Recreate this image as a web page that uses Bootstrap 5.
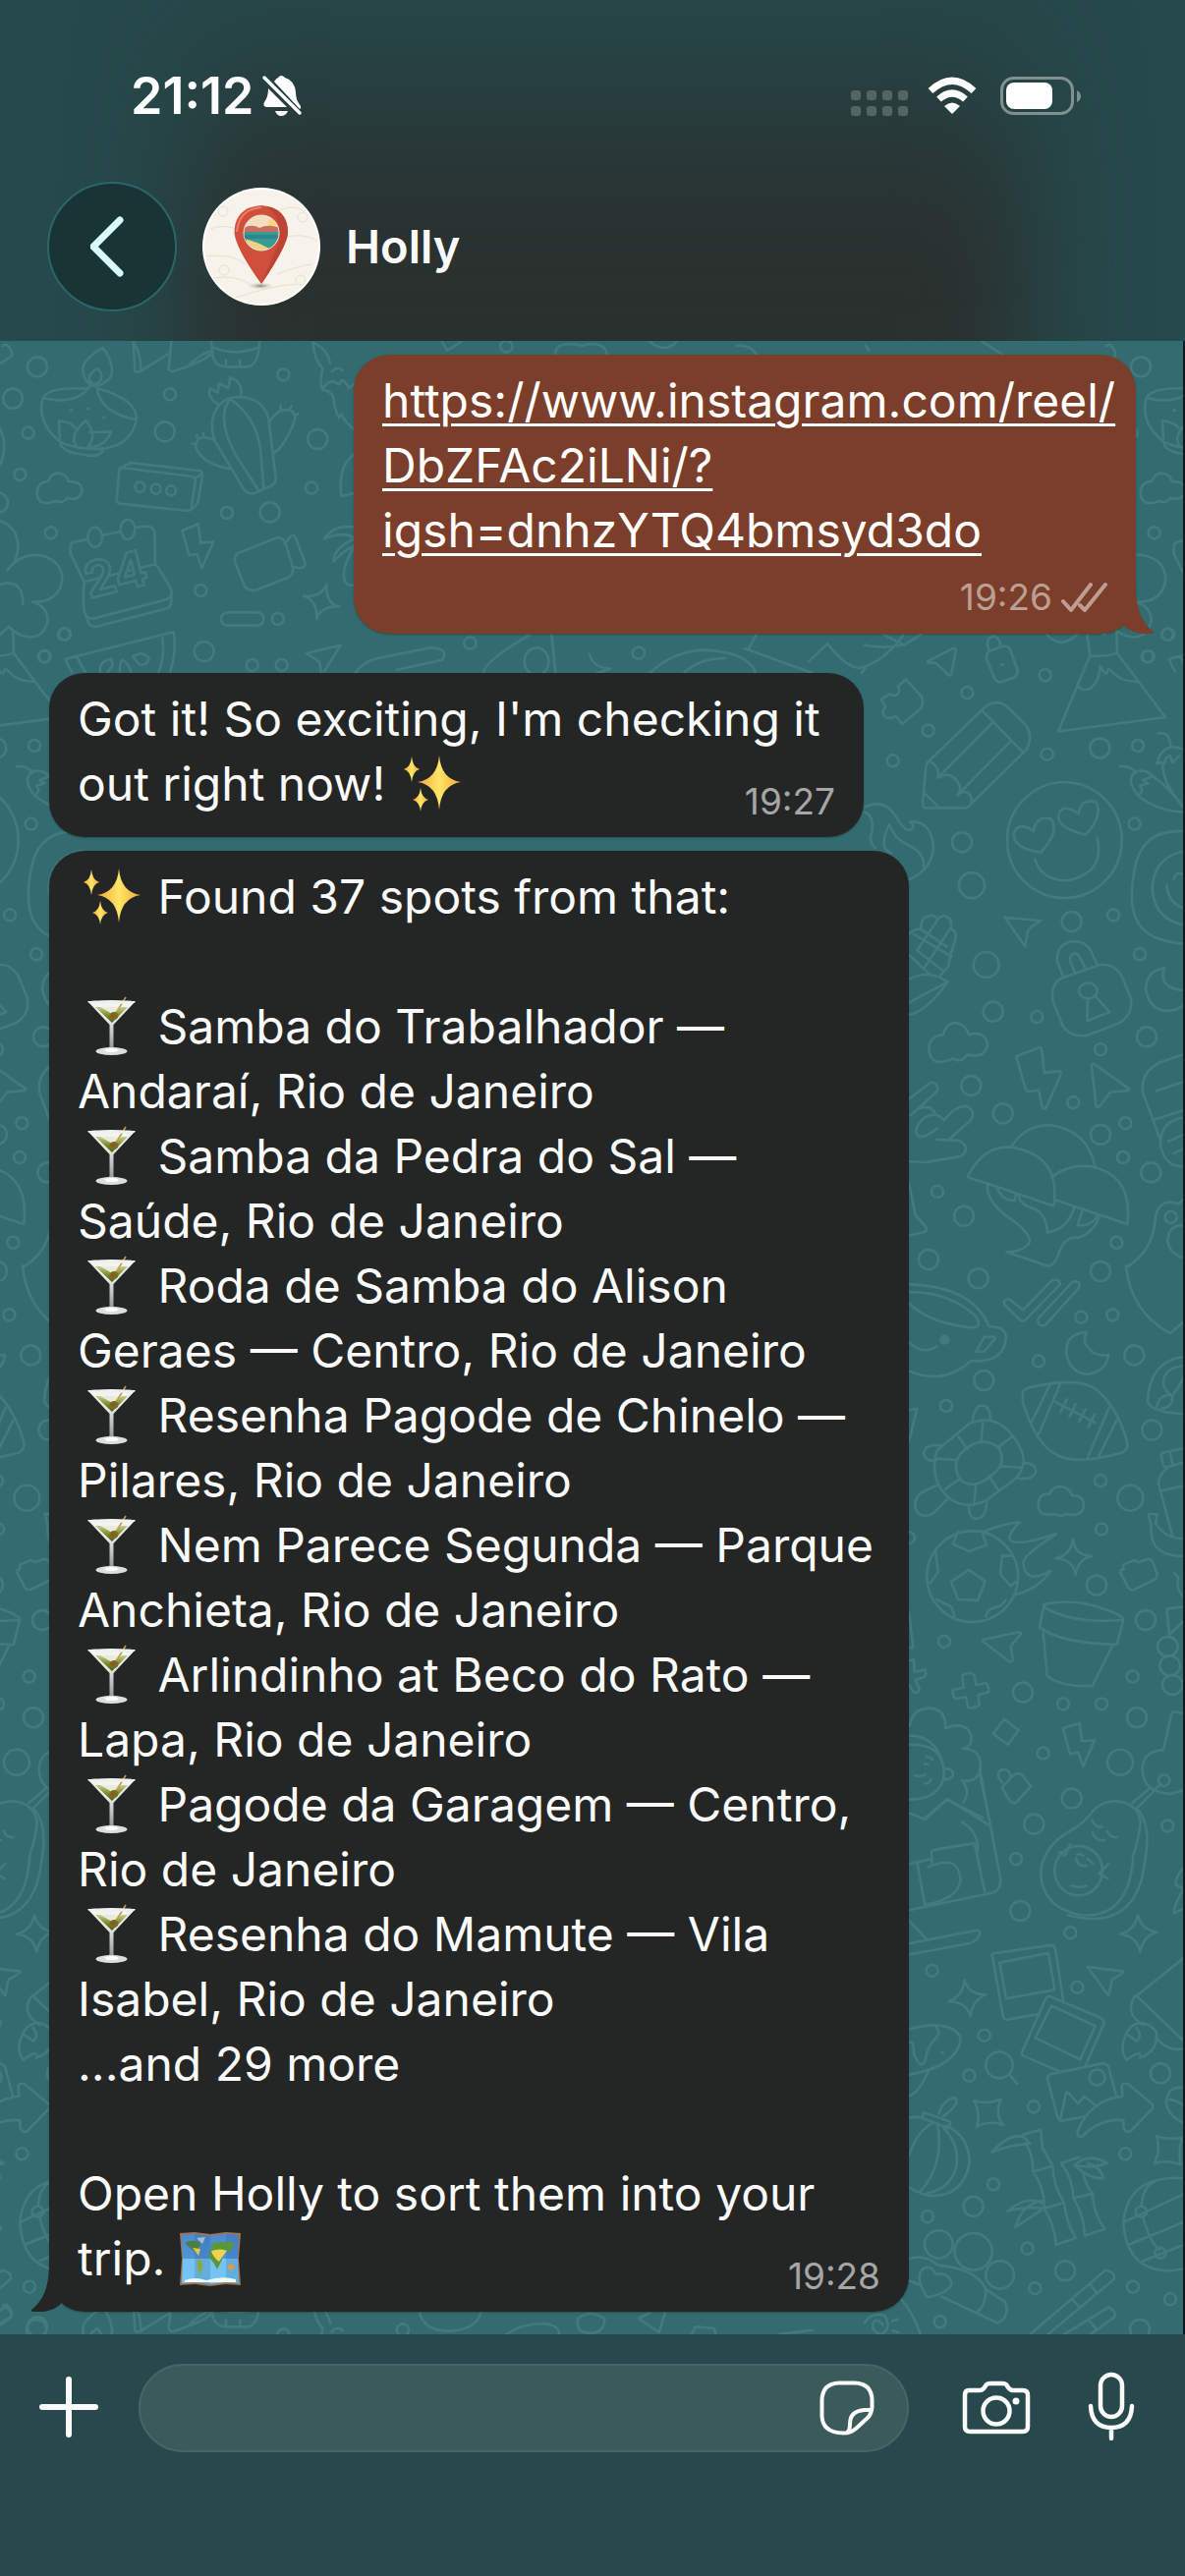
<!DOCTYPE html>
<html lang="en">
<head>
<meta charset="utf-8">
<meta name="viewport" content="width=device-width, initial-scale=1">
<title>Holly</title>
<link href="https://cdn.jsdelivr.net/npm/bootstrap@5.3.0/dist/css/bootstrap.min.css" rel="stylesheet">
<style>
  body { font-family: Inter, "Liberation Sans", sans-serif; background: #26494b; color: #fafafa; }
  svg { display: block; flex: none; }
  .chat-head { background: #26494b; overflow: hidden; padding: 60px 50px 30px 48px; }
  .chat-head::before { content: ""; position: absolute; inset: 0 160px -120px 190px; filter: blur(54px);
    background: linear-gradient(rgba(42,48,46,.1), rgba(42,48,46,.4) 90px, rgba(42,48,46,.8) 180px, #2a302e 270px); }
  .status-row { height: 76px; padding: 0 56px 0 85px; margin-bottom: 49px; }
  .clock { font-size: 52px; line-height: 76px; font-weight: 600; color: #fff; }
  .back-btn { width: 132px; height: 132px; background: #183435; border: 2px solid #2b6668; }
  .contact { font-size: 47px; line-height: 60px; font-weight: 600; color: #fafafa; }
  .chat-area { background: #326c70; border-right: 2px solid #101a1b; padding: 14px 48px 23px 50px; overflow: hidden; }
  .wallpaper { position: absolute; top: 0; left: 0; pointer-events: none; }
  .wallpaper g { fill: none; stroke: #427b7f; stroke-width: 2.6; stroke-linecap: round; stroke-linejoin: round; }
  .wallpaper path, .wallpaper ellipse, .wallpaper rect, .wallpaper text { vector-effect: non-scaling-stroke; }
  .bubble { position: relative; border-radius: 36px; padding: 14px 29px 21px; font-size: 48px; line-height: 66px; max-width: 100%; box-shadow: 0 1px 2px rgba(0,0,0,.25); white-space: nowrap; }
  .bubble-in { background: #242625; }
  .bubble-out { background: #7b3e2a; width: 796px; padding-bottom: 2px; margin-bottom: 40px; }
  .bubble-short { width: 829px; margin-bottom: 14px; }
  .bubble-long { width: 875px; }
  .bubble a { color: #fff; text-decoration: underline; text-decoration-thickness: 3px; text-underline-offset: 6px; }
  .stamp { font-size: 37px; line-height: 44px; color: #a5a6a5; }
  .bubble-in .stamp { position: absolute; right: 29px; bottom: 14px; }
  .bubble-out .stamp { color: #bd9e94; height: 70px; }
  .tail { position: absolute; bottom: 0; }
  .tail-out { right: -19px; }
  .tail-in { left: -19px; transform: scaleX(-1); }
  .emoji { display: inline-block; vertical-align: top; }
  .composer { background: #27494b; padding: 30px 49px 126px 36px; }
  .icon-btn { background: none; border: 0; padding: 0; color: #fafafa; }
  .entry { background: #3b5a5c; border: 2px solid #456668; height: 90px; padding: 0 33px 0 36px; margin: 0 54px 0 37px; }
  .entry input { background: transparent; border: 0; color: #fff; font-size: 48px; box-shadow: none; }
  .entry input:focus { background: transparent; color: #fff; box-shadow: none; }
</style>
<script src="https://cdn.jsdelivr.net/npm/bootstrap@5.3.0/dist/js/bootstrap.bundle.min.js"></script>
</head>
<body class="d-flex flex-column min-vh-100">

<svg width="0" height="0" class="position-absolute" aria-hidden="true">
  <defs>
    <linearGradient id="gold"><stop offset="0" stop-color="#f5a63c"/><stop offset=".5" stop-color="#ffe566"/><stop offset="1" stop-color="#f2a93b"/></linearGradient>
    <linearGradient id="glassy" x2="0" y2="1"><stop offset="0" stop-color="#f6f8f6"/><stop offset=".4" stop-color="#e4e8e2"/><stop offset="1" stop-color="#8d9392"/></linearGradient>
    <linearGradient id="drink" x2="0" y2="1"><stop offset="0" stop-color="#c5cf8e"/><stop offset=".5" stop-color="#838c30"/><stop offset="1" stop-color="#4e571a"/></linearGradient>
    <linearGradient id="sea" x2="0" y2="1"><stop offset="0" stop-color="#4d8bd0"/><stop offset=".48" stop-color="#4f94d8"/><stop offset=".5" stop-color="#77c2f0"/><stop offset="1" stop-color="#6fc6f5"/></linearGradient>
    <symbol id="sparkles" viewBox="0 0 66 66">
      <g fill="url(#gold)"><path d="M41 4Q43 28 63 31Q43 34 41 59Q39 34 19 31Q39 28 41 4Z"/><path d="M13 5Q14 16 21 18Q14 20 13 31Q12 20 5 18Q12 16 13 5Z"/><path d="M22 37Q23 47 30 49Q23 51 22 61Q21 51 14 49Q21 47 22 37Z"/></g>
    </symbol>
    <symbol id="martini" viewBox="0 0 66 66">
      <path d="M9 7H58L35.500 31V53Q37 56 44 57H23Q30 56 31.500 53V31Z" fill="url(#glassy)"/>
      <path d="M17 13H50L34 29Z" fill="url(#drink)"/>
      <path d="M22 13H44L34 20Z" fill="#e9ecdc"/>
      <path d="M48 3L35 24" stroke="#c49a4c" stroke-width="1.6"/>
      <ellipse cx="36" cy="22" rx="4.5" ry="4" fill="#6b7420"/><circle cx="35" cy="22" r="1.8" fill="#b8402a"/>
      <ellipse cx="33.5" cy="8" rx="24" ry="2" fill="#eef0ee"/>
      <ellipse cx="33.5" cy="58" rx="16" ry="4" fill="#dcdfdd"/><ellipse cx="33.5" cy="57" rx="7" ry="2" fill="#fff"/>
    </symbol>
    <symbol id="worldmap" viewBox="0 0 64 66">
      <path d="M1 7L16 6L32 8L48 6L63 7L61 33L63 60L48 59L32 61L16 59L1 60L3 33Z" fill="#9a7657"/>
      <path d="M3 9L16 8L32 10L48 8L61 9L60 33L61 58L48 57L32 59L16 57L3 58L4 33Z" fill="url(#sea)"/>
      <path d="M16 8L32 10V59L16 57ZM48 8L61 9L60 33L61 58L48 57Z" fill="#1d4e86" opacity=".18"/>
      <path d="M6 17Q12 13 21 16Q23 20 19 23L20 29L15 25Q10 21 6 17Z" fill="#4c7d45"/><path d="M14 22L22 23L20 30Z" fill="#e3c44e"/>
      <path d="M19 33Q25 36 24 41Q22 47 22 52L19 43Z" fill="#8fa83a"/><path d="M18 12L27 11L24 18Z" fill="#a9bccb"/>
      <path d="M33 18Q42 14 57 17Q55 23 50 27L46 24Q43 29 44 34Q41 40 39 44Q36 37 32 33Q29 28 33 24Z" fill="#5a963c"/><path d="M33 25Q43 22 49 25Q44 31 41 36Q35 32 33 25Z" fill="#f0d251"/>
      <path d="M50 40Q55 36 57 42Q54 46 50 43Z" fill="#e89a3c"/><path d="M6 55Q16 51 28 55Q44 50 58 54V57H6Z" fill="#f1f6f8"/>
    </symbol>
    <symbol id="bubbletail" viewBox="0 0 40 50"><path d="M9 42V2H21C21 26 28 40 39 48Q40 50 36 50C25 51 15 48 9 42Z"/></symbol>
  </defs>
</svg>

<header class="chat-head position-relative">
  <div class="status-row position-relative d-flex align-items-center justify-content-between">
    <div class="d-flex align-items-center gap-2">
      <span class="clock">21:12</span>
      <svg width="42" height="46" viewBox="0 0 42 46" fill="#fff" aria-label="Silent"><path d="M13 8Q15 5 17 4Q20 0 24 4Q34 7 35 19Q35 27 40 33Q41 35 39 36ZM7 15L26 34H5Q1 33 3 29Q7 24 7 15ZM14 38H27Q25 43 20 43Q16 43 14 38Z"/><path d="M3 4L39 40" stroke="#fff" stroke-width="3.5" stroke-linecap="round"/></svg>
    </div>
    <div class="d-flex align-items-center gap-4">
      <svg width="54" height="40" viewBox="4 0 54 40" overflow="visible" fill="#546664"><g id="drow"><rect x="4" y="14" width="10" height="10" rx="3"/><rect x="20" y="14" width="10" height="10" rx="3"/><rect x="36" y="14" width="10" height="10" rx="3"/><rect x="52" y="14" width="10" height="10" rx="3"/></g><use href="#drow" y="16"/></svg>
      <svg width="50" height="40" viewBox="0 0 50 40" fill="none" stroke="#fff" stroke-width="7"><path d="M3 14.500Q25-6 47 14.500M11.500 23Q25 11 38.500 23"/><path d="M17 30Q25 23 33 30L25 38Z" fill="#fff" stroke="none"/></svg>
      <svg width="82" height="40" viewBox="0 0 82 40"><rect x="1.500" y="1.500" width="72" height="36" rx="12" fill="none" stroke="#80908f" stroke-width="3"/><rect x="6" y="6" width="47" height="27" rx="8" fill="#fff"/><path d="M78 14Q82 16 82 20T78 26Z" fill="#80908f"/></svg>
    </div>
  </div>
  <div class="position-relative d-flex align-items-center">
    <button type="button" class="back-btn rounded-circle d-flex align-items-center justify-content-center p-0" aria-label="Back">
      <svg width="44" height="64" viewBox="3 0 44 64" fill="none" stroke="#d8fbfc" stroke-width="7" stroke-linecap="round" stroke-linejoin="round"><path d="M33 5L6 32L33 59"/></svg>
    </button>
    <svg class="ms-4 me-4" width="124" height="120" viewBox="0 0 124 120" aria-hidden="true">
      <defs><radialGradient id="pinshade"><stop offset="0" stop-color="#8a8074"/><stop offset="1" stop-color="#f6f2e8" stop-opacity="0"/></radialGradient><clipPath id="pinhole"><circle cx="62" cy="46" r="18"/></clipPath></defs>
      <circle cx="62" cy="60" r="60" fill="#fff"/><circle cx="62" cy="60" r="58" fill="#f7f3ea"/>
      <g fill="none" stroke="#e6e0d4" stroke-width="1"><path d="M10 42Q25 36 40 44M80 24Q92 16 106 24M6 70Q30 66 46 78M88 50Q105 46 119 54M78 88Q98 80 114 78M14 92Q36 88 54 100M36 112Q70 100 98 98"/><circle cx="23" cy="24" r="5"/><circle cx="104" cy="30" r="5"/><circle cx="24" cy="84" r="5"/><circle cx="102" cy="94" r="5"/></g>
      <ellipse cx="61" cy="100" rx="15" ry="4" fill="url(#pinshade)"/>
      <path d="M62 18Q89 20 89 46Q88 60 62 98Q36 62 34.500 46Q35 20 62 18Z" fill="#cf4e3c"/>
      <path d="M68 19Q89 24 89 46Q88 60 62 98Q74 70 80 55Q84 34 68 19Z" fill="#b8412f" opacity=".8"/>
      <path d="M37 45Q39 22 62 20" fill="none" stroke="#e8806a" stroke-width="2"/>
      <g clip-path="url(#pinhole)"><path d="M40 26h44v40H40z" fill="#f6dcc0"/><circle cx="73" cy="36" r="4" fill="#f7d77b"/><path d="M42 42Q52 36 60 41Q70 36 84 42V46H42Z" fill="#c96f5f"/><path d="M42 45H84V66H42Z" fill="#379d8e"/><path d="M42 48H84V52H42Z" fill="#2c8590"/><path d="M44 52Q62 56 76 66H44Z" fill="#efd384"/><path d="M44 46l4 12h-4z" fill="#243c3c"/></g>
      <circle cx="62" cy="46" r="18" fill="none" stroke="#f2e4d2" stroke-width="1"/>
    </svg>
    <h1 class="contact mb-0">Holly</h1>
  </div>
</header>

<main class="chat-area position-relative flex-grow-1 d-flex flex-column">
  <svg class="wallpaper" width="1204" height="2029" viewBox="0 347 1204 2029" aria-hidden="true">
    <defs>
    <g id="tile-left">
      <g transform="translate(0 340) scale(.333333)">
        <path d="M131 195Q150 160 265 167Q280 160 283 152M131 195Q230 220 275 160M296 158Q300 240 417 262M296 165Q420 200 417 262Q400 340 315 350Q310 375 270 371Q180 360 185 330Q110 270 131 195M185 330Q240 355 315 350M313 42Q250 80 253 110Q258 158 295 158Q345 145 342 105Q335 65 313 42ZM297 105Q265 125 275 145Q295 160 308 140Q315 120 297 105ZM183 322L180 265Q220 270 232 290M232 340Q210 310 262 264Q300 310 268 345M275 300L340 298Q320 345 275 345M215 233h4M268 228h4M315 255h4"/>
        <path d="M365 410L400 393L612 418Q618 420 618 432L606 505Q600 530 575 540L365 518Q355 515 356 505ZM370 408L585 435Q598 438 596 450L584 535M596 440L616 428"/>
        <ellipse cx="427" cy="467" rx="15" ry="15"/><ellipse cx="476" cy="473" rx="15" ry="15"/><ellipse cx="522" cy="478" rx="15" ry="15"/>
        <path d="M665 215Q630 190 642 165L665 180L668 150L697 165L703 132Q745 150 735 188M745 475L655 325Q630 240 690 200Q740 180 790 210Q820 235 822 275L842 440Q842 455 830 462L775 487Q755 488 745 475ZM700 200Q660 260 720 370L790 478M705 200Q790 260 797 370L805 470M655 325Q600 300 597 345Q620 400 705 412M822 268Q850 225 885 232Q910 245 895 275Q870 340 835 365M857 230v-12M884 230l6-10M900 248l10-4M598 338l-10-4M605 320l-5-12M622 314l-2-12"/>
        <path d="M725 670L845 622Q865 620 872 640L895 715Q895 735 880 743L780 782Q755 785 747 770L717 695Q715 680 725 670ZM868 640L890 615Q897 612 903 622L932 700Q930 715 915 715L893 710M556 600L605 580L613 638L652 634L616 715L602 672L578 676ZM997 765Q995 825 1035 832Q980 830 967 870Q970 815 928 800Q980 805 997 765Z"/>
        <rect x="675" y="850" width="130" height="40" rx="20"/>
        <path d="M265 628L225 635Q215 638 215 650V670L257 757Q250 840 262 860L272 885Q280 895 295 893L510 838Q520 835 522 825L524 790Q522 775 515 765L474 700L472 605Q468 585 440 587L412 592M312 615L370 603M262 860Q275 872 290 868L510 810Q520 805 522 795M257 757L474 703"/>
        <ellipse cx="290" cy="620" rx="22" ry="30"/><ellipse cx="390" cy="597" rx="22" ry="30"/>
        <text x="272" y="808" transform="rotate(-14 272 808)" font-size="150" font-weight="700" font-family="Inter, sans-serif" fill="#326c70">24</text>
        <path d="M113 485Q115 450 148 450Q155 425 180 425Q205 428 209 450Q252 450 251 480Q240 512 205 500Q190 520 172 510Q115 530 113 485ZM0 570Q55 590 55 650Q55 690 22 722Q60 670 120 675Q190 690 190 750Q180 820 100 818Q150 835 145 880Q130 930 85 925Q50 920 27 893L0 918M0 765Q70 745 70 825"/>
        <path d="M200 992L530 910Q540 970 520 1031M200 992Q205 1010 220 1031M235 985Q245 1010 260 1031M495 920Q505 980 485 1031M306 1031Q300 1000 340 992L344 1010L330 1031M405 985Q435 965 455 990Q450 1015 425 1008ZM366 1031Q365 1000 375 995Q395 1010 400 1031"/>
        <path d="M645 24L650 70Q660 100 690 100L760 100Q790 90 792 24M650 40Q720 70 790 40M690 80v20M733 80v20M407 24L412 110Q415 120 430 113L515 60M407 24Q430 60 430 108M523 24L515 105Q520 118 535 112Q620 85 645 60M575 98Q610 60 645 52M0 90L35 68Q40 50 20 32L8 36"/>
        <path d="M955 26Q960 80 985 105Q975 150 985 170Q1020 175 1020 210Q1025 240 1035 255L1042 245Q1060 280 1085 292M955 26Q1000 45 1008 90M985 168Q1010 130 1035 155Q1045 125 1065 165L1085 150M1013 115Q1030 95 1047 112M990 625Q1020 580 1085 590M990 625Q1050 600 1085 625Q1020 650 1018 695Q1050 660 1085 645Q1030 730 1060 765L1085 768M935 975L1040 950L990 1031M935 975L975 1000L980 1031M1085 365Q1030 400 1042 495L1085 485M0 290Q25 340 0 400"/>
      </g>
      <g data-rings="519,184,s 865,124,s 86,302,s 61,429,s 155,607,s 693,546,s 613,783,s 951,470,s 198,917,s 137,985,s 770,1011,s 860,1011,s 848,870,s 114,100,m 39,197,m 503,298,m 970,321,m 824,544,m 623,969,m -6,515,m" data-map="0,340,.333333,.333333"></g>
    </g>
    <g id="tile-right">
      <g transform="translate(880 640) scale(.333333 .414541)">
        <path d="M192 80L270 48Q278 46 278 54L266 108Q264 116 256 114L228 92Q215 80 192 84ZM380 55L425 42Q440 42 446 55L466 100Q468 115 455 120L415 131Q402 132 396 120L372 75Q370 62 380 55ZM380 52L374 40Q374 20 395 18Q410 20 416 44M417 88h6M125 124L172 165Q182 180 172 195L115 234L94 214Q80 224 62 216Q48 204 64 190L50 174L76 160Q100 170 106 152L102 142Z"/>
        <path d="M357 200Q400 165 440 195L490 235Q515 260 496 295L325 430Q315 442 295 440L185 440Q176 438 177 425L187 340Q190 325 200 322ZM357 200L484 304M390 231L226 364M446 276L286 406M197 325Q232 340 223 366Q265 345 290 385Q295 400 283 408Q310 390 327 415Q325 430 318 436M180 402L226 438"/>
        <path d="M679 14L688 66L591 252L918 217L771 60L769 10M688 66Q730 70 771 60M650 132Q655 155 685 148Q715 135 719 92Q735 115 740 108Q745 90 755 105Q780 130 832 130M554 12Q600 55 650 12"/>
        <ellipse cx="610" cy="519" rx="175" ry="142"/>
        <path d="M538 549Q455 540 455 505Q465 470 515 497Q525 455 570 468Q595 500 538 549ZM675 506Q590 490 592 460Q600 425 653 454Q660 415 705 425Q730 455 675 506ZM519 565Q540 620 620 618Q735 600 710 513"/>
        <path d="M895 257Q930 250 935 288M892 332Q905 290 945 290L990 300M892 332Q905 325 915 332Q918 315 932 312L940 328L960 312M910 335Q910 380 975 440M780 338Q815 335 828 355M835 410Q795 370 828 350Q860 345 880 362L850 372L865 380L840 385L848 398ZM880 362Q930 390 975 440M835 410Q900 450 980 450M980 498Q860 490 830 570Q790 700 860 745Q900 770 980 774M980 545Q880 560 878 640Q885 715 980 728M922 628Q925 675 980 688M943 615Q950 595 970 603"/>
        <path d="M0 438Q60 415 95 460Q130 510 148 488Q150 480 138 474Q205 470 210 540Q200 600 120 620M75 480Q40 540 80 550M75 480Q90 515 130 530Q185 550 180 585M0 450Q30 460 22 500Q10 520 32 538M0 40Q60 50 120 40L175 12M60 15L120 40"/>
        <path d="M135 750Q150 735 172 738Q170 705 205 704Q220 706 222 715Q240 695 262 715Q266 730 262 735Q285 745 275 768L262 800L255 830L232 850M172 738L250 780M222 715L160 790L240 840M262 735L180 835M150 750L265 805M135 800L200 850M135 860Q200 835 253 867Q190 940 135 948M135 918L253 867M427 708L538 717Q500 735 497 745L490 780Z"/>
        <path d="M600 858L715 826Q755 818 783 850L812 905Q822 945 780 967L680 998Q630 1005 605 975L575 915Q565 875 600 858ZM607 856L588 818Q585 770 640 767Q675 768 690 790L711 826M641 842L627 815Q625 798 642 797Q652 798 660 812L674 833M681 908L679 963L748 941L704 902"/><ellipse cx="682" cy="889" rx="28" ry="19"/>
        <path d="M915 833Q860 840 858 885Q870 940 930 938Q960 935 980 920M915 833Q895 885 980 888M240 997Q250 965 280 968Q310 972 318 997Q370 985 375 1022Q370 1055 312 1046Q295 1068 270 1055Q205 1080 196 1035Q195 1000 240 997ZM463 1050L533 1028Q541 1028 541 1036L548 1090L594 1086Q602 1088 598 1096L555 1175Q548 1182 542 1175L532 1133L502 1136Q494 1138 491 1130ZM693 1075Q692 1064 703 1070L805 1128Q812 1134 800 1134L750 1138L720 1170Q708 1180 706 1168Z"/>
        <path d="M135 1155L200 1115Q225 1112 222 1135L140 1195M160 1180Q200 1165 215 1190M158 1240Q150 1230 175 1205Q215 1180 242 1207Q280 1170 310 1172Q345 1185 320 1210L257 1254M221 1254L290 1257Q325 1275 295 1295L190 1310L135 1308M158 1240Q170 1260 222 1226M135 1360L155 1440L188 1470Q190 1480 180 1482L135 1490"/>
        <path d="M314 1346Q360 1270 445 1273Q600 1290 577 1417ZM448 1272Q490 1218 565 1219Q680 1230 703 1320M575 1344Q620 1315 690 1320Q820 1340 802 1462L583 1403M375 1368Q370 1400 430 1440Q520 1490 500 1510Q480 1530 433 1530L555 1564Q575 1568 590 1540Q610 1490 650 1495Q700 1485 717 1440M470 1393Q475 1415 520 1425Q555 1440 558 1482Q620 1475 640 1420M403 1372Q420 1405 458 1404L462 1388M665 1428L650 1464Q690 1470 712 1440"/>
        <path d="M980 1043L900 1065Q840 1090 850 1140L905 1260M890 1135L980 1110M885 1205L980 1180M980 1200Q900 1205 903 1270Q920 1325 980 1320M928 1258L980 1240M943 1288L980 1275M798 1568Q880 1530 887 1450Q895 1395 960 1412L980 1395M980 1465Q925 1460 925 1505Q935 1540 980 1545"/>
      </g>
      <g data-rings="313,157,s 551,114,s 863,68,s 924,14,s 194,250,s 86,324,s 557,308,s 834,287,s 824,479,s 759,703,s 840,799,s 526,953,s 720,1033,s 637,1163,s 796,1214,s 789,1298,s 222,1382,s 769,1507,s 935,1445,s 718,293,m 297,524,m 632,719,m 392,940,m 861,1002,m 325,1122,m 422,1190,m 720,1242,m 874,1335,m 303,1442,m 195,1549,m 327,630,l 371,825,l" data-map="880,640,.333333,.414541"></g>
      <g transform="translate(880 1250) scale(.333333 .382653)">
        <path d="M135 150Q330 155 380 262M135 170Q260 170 340 235Q360 262 330 265Q200 255 135 200M380 262Q430 260 432 292Q425 360 325 353Q240 420 135 380M365 290L395 289Q402 292 390 303L365 328L340 329ZM135 303Q175 340 220 314M428 205Q420 190 440 188L484 218L570 140Q595 132 597 150L490 245Q483 250 475 245ZM530 240L635 143Q660 138 655 158L552 258Q525 265 530 240ZM678 277Q610 280 616 335Q630 390 685 388Q740 380 744 337Q700 345 675 310Q668 290 678 277ZM798 100Q810 220 932 280L980 245"/>
        <ellipse cx="244" cy="297" rx="12" ry="10" fill="#427b7f"/>
        <path d="M482 445Q480 430 500 425Q640 395 700 425Q770 470 802 570Q805 590 785 598Q650 630 590 605Q520 575 482 460ZM566 416L511 514M598 413L532 547M746 478L681 610M769 512L715 606M583 463L705 518M617 455L598 490M644 468L625 503M674 482L654 516M702 495L683 530"/>
        <path d="M215 615Q215 590 240 577L320 520Q390 495 440 540Q500 600 480 640Q470 665 440 680L370 725Q310 750 260 720Q205 680 215 615ZM280 625Q285 600 320 580Q370 555 410 585Q430 620 405 645L370 670Q330 690 300 675Q275 655 280 625ZM361 516L355 566M452 554L411 581M477 637L415 633M407 695L379 659M333 738L340 683M246 695L288 668M219 613L281 617M287 555L313 588M329 515Q335 470 360 472Q385 475 383 510M240 580Q185 570 180 600Q190 625 220 617M485 625Q525 625 522 650Q510 672 463 665M225 682L170 705Q140 735 165 760Q190 772 215 755L256 717M318 740Q318 775 345 773Q370 770 373 727"/>
        <path d="M564 708Q575 685 600 688Q625 690 635 712Q670 710 669 742Q660 770 615 760Q600 770 580 760Q530 770 530 735Q532 705 564 708ZM135 485L160 480L135 568M135 1020L148 1117H135"/>
        <ellipse cx="329" cy="927" rx="139" ry="121"/>
        <path d="M317 909L368 939L346 990L285 988L264 941ZM285 808L269 840L319 860L372 843L358 808M450 872L420 872L414 920L446 952L462 940M217 862L224 915L200 945M220 988L265 1008L274 1033M370 1033L378 1015L415 1005L430 990M365 806Q430 785 474 782Q440 810 442 828Q460 850 585 813Q485 870 484 890Q490 950 568 912Q530 960 460 975M636 828Q640 870 695 873Q650 880 644 922Q635 880 583 878Q630 870 636 828ZM790 895L825 883L835 889L865 880Q875 880 880 890L893 920Q893 932 885 935L820 963Q808 963 803 953L780 915Q780 908 790 908Z"/>
        <path d="M980 585L915 597Q905 598 905 605L912 630Q915 638 925 635L980 622M925 637Q895 660 897 680L940 820M903 700L980 684M932 595L940 628M866 760L893 762L888 785Q920 830 980 825M866 760L875 790Q865 875 980 873M945 918Q965 930 955 945Q955 970 980 985M980 1006L922 1013L930 1082L980 1040M980 342Q870 350 864 460Q870 490 980 495M980 365Q910 370 912 415Q920 440 940 445Q980 400 975 380M892 475Q900 440 940 445Q940 480 905 480"/>
        <ellipse cx="925" cy="1113" rx="31" ry="26"/><ellipse cx="932" cy="1164" rx="31" ry="26"/><ellipse cx="940" cy="1215" rx="31" ry="26"/>
        <path d="M550 1000Q640 985 720 1010Q790 1030 790 1042Q640 1055 550 1010ZM548 1000L534 1062Q600 1105 770 1108L790 1042M545 1078L557 1190Q590 1220 695 1218L756 1112M360 1095L470 1075Q480 1075 475 1082L446 1112L452 1148Q450 1158 440 1152L362 1100ZM297 1190Q325 1178 335 1190L340 1215L370 1210Q382 1218 378 1235L346 1242L350 1268Q335 1280 315 1275L309 1247L280 1252Q265 1245 270 1228L303 1222ZM426 1306L470 1336L437 1374L392 1345ZM605 1330L657 1317L663 1365L702 1362L667 1432L652 1395L627 1399ZM135 1150L150 1148L152 1180L185 1175Q190 1190 180 1195L155 1202L167 1225Q160 1240 150 1235L135 1215"/>
        <path d="M137 1325Q145 1275 205 1277Q250 1285 246 1330Q310 1310 325 1350Q330 1380 300 1385Q360 1385 353 1440Q345 1475 298 1470Q325 1500 300 1528M135 1350Q230 1350 243 1450M135 1374Q240 1370 243 1450Q235 1520 135 1520M243 1440Q270 1435 270 1455Q260 1470 243 1465M185 1568L250 1520L360 1568M351 1450L378 1568M188 1407Q200 1405 207 1413M152 1456Q170 1460 185 1454M183 1478Q195 1478 203 1467M183 1426h10M419 1488L455 1455Q475 1445 485 1460L508 1485L460 1530Q450 1530 440 1520ZM420 1475Q395 1450 420 1440Q445 1440 445 1460M980 1292L950 1287Q940 1285 936 1295L912 1388Q850 1390 848 1440Q850 1500 930 1505L980 1495M816 1530L870 1490M835 1540L905 1478"/>
        <ellipse cx="914" cy="1469" rx="17" ry="15"/>
      </g>
      <g data-rings="661,237,s 757,231,s 531,354,s 249,473,s 720,672,s 723,801,s 135,824,s 243,1100,s 818,1193,s 606,1266,s 723,1266,s 545,1397,s 347,134,m 720,115,m 823,338,m 364,405,m 877,537,m 708,950,m 858,1043,m 483,1235,m 831,1302,m 632,1517,m 811,718,l 780,1421,l" data-map="880,1250,.333333,.382653"></g>
      <g transform="translate(880 1800) scale(.333333 .382653)">
        <path d="M765 87Q830 90 842 140Q840 180 820 230Q810 400 660 390Q535 370 538 270Q550 200 640 160Q670 145 700 110Q725 88 765 87ZM830 105Q870 140 860 220Q850 290 840 310Q790 430 620 390M695 138Q705 160 725 155M695 170Q705 195 732 191M740 167Q750 185 770 183M630 312Q655 320 677 312M645 240Q655 265 678 258M680 240L697 253M745 253L715 280L744 293M648 229Q660 226 667 232M593 222L612 232L628 202"/><ellipse cx="653" cy="272" rx="73" ry="66"/>
        <path d="M351 0L415 295Q415 320 395 330L135 377M135 118L184 136L254 82L380 151M296 142Q350 170 345 220M205 250L204 225Q204 218 215 216L335 199L367 328M135 254L160 248L184 365M193 263Q290 225 293 300Q280 350 184 362M160 250L205 240M135 466L345 430Q355 432 350 445Q340 462 320 465L135 495M135 405L190 455"/>
        <path d="M607 620L582 480Q578 470 570 470L395 492Q385 495 390 500L423 662Q428 670 436 668L535 653M412 517L561 491L580 589L432 612ZM672 795L730 680Q732 672 725 665L567 607Q558 605 553 612L480 755Q478 763 488 766L595 806M570 631L704 685L658 774L521 717ZM767 868L745 795Q740 785 725 785L570 813Q555 818 558 825L588 925Q593 938 605 937L672 926M597 935L615 862Q620 860 625 866L652 892L670 872L704 896M650 965Q690 880 787 872L785 845Q790 835 805 840L878 893Q882 900 878 905L812 965Q795 970 790 955L790 936Q720 930 665 978Q648 985 650 965Z"/>
        <ellipse cx="710" cy="822" rx="24" ry="21"/><ellipse cx="411" cy="789" rx="41" ry="35"/>
        <path d="M440 812L465 838M305 563Q315 600 369 602Q330 615 323 659Q310 620 257 620Q300 605 305 563ZM334 884Q375 895 416 880Q395 920 424 949Q380 935 342 953Q355 920 334 884ZM834 390Q845 430 893 435Q850 445 841 488Q830 445 780 441Q825 430 834 390ZM980 980Q930 990 891 978Q905 1015 884 1051Q925 1040 966 1054Q955 1020 970 982M680 528L790 540Q790 545 755 562L745 605Z"/>
        <path d="M135 693Q260 665 293 715Q290 790 135 815M135 730Q150 720 150 760Q175 810 187 770Q190 740 220 715Q235 700 215 685M197 802Q160 870 135 870M235 755h4M135 930Q160 925 178 930M180 915L263 940L256 957L176 930ZM226 918Q240 880 275 876Q295 890 240 925M250 950Q320 980 320 1050Q300 1140 200 1137L170 1130M222 948Q240 1020 200 1090Q185 1110 170 1125M240 955Q290 1000 280 1060Q260 1120 190 1130M135 1030Q160 965 205 945M135 1115Q155 1125 175 1130"/>
        <path d="M482 975L537 961L543 1010L574 1057Q575 1110 609 1155Q615 1210 645 1249L584 1267Q580 1215 548 1170Q550 1115 514 1073Q515 1030 492 997M388 1021Q440 970 485 980L505 998Q450 1000 388 1021M514 1073L574 1057M548 1170L609 1155M548 1170Q480 1165 436 1178Q500 1130 548 1160M548 1170L460 1220Q480 1160 540 1150M655 1034L600 1050Q635 1090 638 1143Q670 1190 672 1243L733 1225Q700 1190 695 1130Q675 1110 668 1080M638 1143L697 1130M641 1056Q680 1020 740 1050Q700 1065 641 1056Q690 1095 730 1090Q720 1060 680 1050"/>
        <path d="M980 500L830 605L980 730M826 605Q790 650 850 682M890 715Q920 755 980 745M800 775Q770 740 810 690Q850 660 890 700Q900 750 840 770Q850 745 800 775M805 710L830 725Q850 710 830 690M980 1090Q800 1080 790 1210Q800 1340 940 1336L980 1330M795 1205L980 1130M805 1267L980 1205M845 1165Q850 1110 885 1100M850 1195Q870 1260 900 1280M850 1310L980 1265M980 260Q945 290 950 310L975 320Q940 370 945 385L980 370M980 850Q925 840 920 890Q930 930 980 945M925 880Q950 880 980 900"/>
        <ellipse cx="844" cy="1179" rx="17" ry="14"/><ellipse cx="903" cy="1289" rx="17" ry="14"/><ellipse cx="226" cy="1266" rx="43" ry="37"/><ellipse cx="332" cy="1285" rx="57" ry="49"/><ellipse cx="413" cy="1347" rx="43" ry="37"/>
        <path d="M135 1305Q180 1290 225 1322Q340 1330 370 1385Q370 1430 345 1444M372 1387L430 1420Q445 1460 405 1475L235 1405M190 1407Q150 1350 180 1330Q205 1320 215 1345Q260 1340 265 1370Q260 1395 190 1407M135 1362L165 1372M505 1505L735 1335Q765 1340 762 1358L560 1505M633 1412L655 1432M688 1370L707 1395M610 1505L745 1433Q770 1445 762 1460L690 1505M683 1465L705 1490M110 1410Q150 1450 170 1505M85 1470L103 1465M85 1495L103 1500M0 1475Q20 1445 60 1455Q85 1490 50 1505Q20 1500 25 1475Q40 1460 55 1480"/>
      </g>
      <g data-rings="925,153,s 462,241,s 628,437,s 206,538,s 649,582,s 365,710,s 319,817,s 516,900,s 796,1025,s 393,1106,s 192,1192,s 497,1277,s 520,1383,s 819,1379,s 933,1412,s 230,1472,s 517,148,m 475,379,m 903,811,m 332,1165,m 612,1336,m 840,1492,m" data-map="880,1800,.333333,.382653"></g>
    </g>
    </defs>
    <g>
      <use href="#tile-left"/><use href="#tile-left" x="1123"/><use href="#tile-left" y="1995"/>
      <use href="#tile-right"/><use href="#tile-right" x="-1123"/>
    </g>
    <g transform="translate(0 340) scale(.76913 .333333)">
      <path d="M640 1035Q640 1000 700 920M730 920L735 1035M470 1035Q480 1000 500 990L570 958Q595 960 585 995L525 1025M780 978Q785 1020 808 1022L790 1035M860 1035Q890 970 930 965Q990 970 1000 1035M905 1035Q925 990 960 990M985 960L1075 1035M1000 920L990 965M1070 1000L1095 945Q1120 1020 1138 1020Q1170 1000 1195 920M1145 1020L1140 1035M585 24L592 50L610 24M735 60Q735 20 770 35Q800 20 803 60M860 24Q880 60 895 24M975 35Q995 35 1000 60M1145 35L1150 50M1300 24L1325 60"/>
      <ellipse cx="710" cy="1000" rx="16" ry="42"/><ellipse cx="622" cy="944" rx="8" ry="18"/><ellipse cx="845" cy="974" rx="8" ry="18"/><ellipse cx="670" cy="38" rx="8" ry="18"/>
    </g>
    <g transform="translate(0 2200) scale(.76913 .333333)">
      <path d="M555 459Q560 518 595 518Q630 515 637 459M670 528Q690 495 720 495Q740 500 740 528M765 480Q780 450 800 480Q800 525 780 525Q760 520 765 480M845 480L860 462M845 480L872 522L880 462M915 528L920 505L945 510L947 528M1030 528L1075 515"/>
      <ellipse cx="533" cy="514" rx="8" ry="18"/>
    </g>
  </svg>

  <div class="bubble bubble-out align-self-end">
    <a href="https://www.instagram.com/reel/DbZFAc2iLNi/?igsh=dnhzYTQ4bmsyd3do">https://www.instagram.com/reel/<br>DbZFAc2iLNi/?<br>igsh=dnhzYTQ4bmsyd3do</a>
    <div class="stamp d-flex align-items-center justify-content-end gap-2">19:26
      <svg width="48" height="34" viewBox="0 0 48 34" fill="none" stroke="#bd9e94" stroke-width="4" stroke-linecap="round" stroke-linejoin="round" aria-label="Delivered"><path d="M3 21L11 30L31 4M20 25L25 30L46 4"/></svg>
    </div>
    <svg class="tail tail-out" width="40" height="50" fill="#7b3e2a"><use href="#bubbletail"/></svg>
  </div>

  <div class="bubble bubble-in bubble-short">
    Got it! So exciting, I'm checking it<br>out right now! <svg class="emoji" width="66" height="66" aria-label="sparkles"><use href="#sparkles"/></svg>
    <span class="stamp">19:27</span>
  </div>

  <div class="bubble bubble-in bubble-long">
    <svg class="emoji" width="68" height="66" aria-label="sparkles"><use href="#sparkles"/></svg> Found 37 spots from that:<br><br>
    <svg class="emoji" width="68" height="66"><use href="#martini"/></svg> Samba do Trabalhador —<br>Andaraí, Rio de Janeiro<br>
    <svg class="emoji" width="68" height="66"><use href="#martini"/></svg> Samba da Pedra do Sal —<br>Saúde, Rio de Janeiro<br>
    <svg class="emoji" width="68" height="66"><use href="#martini"/></svg> Roda de Samba do Alison<br>Geraes — Centro, Rio de Janeiro<br>
    <svg class="emoji" width="68" height="66"><use href="#martini"/></svg> Resenha Pagode de Chinelo —<br>Pilares, Rio de Janeiro<br>
    <svg class="emoji" width="68" height="66"><use href="#martini"/></svg> Nem Parece Segunda — Parque<br>Anchieta, Rio de Janeiro<br>
    <svg class="emoji" width="68" height="66"><use href="#martini"/></svg> Arlindinho at Beco do Rato —<br>Lapa, Rio de Janeiro<br>
    <svg class="emoji" width="68" height="66"><use href="#martini"/></svg> Pagode da Garagem — Centro,<br>Rio de Janeiro<br>
    <svg class="emoji" width="68" height="66"><use href="#martini"/></svg> Resenha do Mamute — Vila<br>Isabel, Rio de Janeiro<br>
    ...and 29 more<br><br>
    Open Holly to sort them into your<br>trip. <svg class="emoji" width="64" height="66" aria-label="world map"><use href="#worldmap"/></svg>
    <span class="stamp">19:28</span>
    <svg class="tail tail-in" width="40" height="50" fill="#242625"><use href="#bubbletail"/></svg>
  </div>
</main>

<footer class="composer d-flex align-items-center">
  <button type="button" class="icon-btn" aria-label="Add">
    <svg width="68" height="68" viewBox="0 0 68 68" fill="none" stroke="currentColor" stroke-width="6" stroke-linecap="round"><path d="M34 5V61M7 33H61"/></svg>
  </button>
  <div class="entry rounded-pill d-flex align-items-center flex-grow-1">
    <input type="text" class="form-control p-0" aria-label="Message">
    <button type="button" class="icon-btn" aria-label="Stickers">
      <svg width="56" height="56" viewBox="0 0 56 56" fill="none" stroke="currentColor" stroke-width="4" stroke-linejoin="round"><path d="M20 2.500H36Q53 3 53.500 20V27Q53 34 49 38L37 49Q31 54 24 53.500Q3 53 2.500 36V20Q3 3 20 2.500ZM53 30H46Q31 31 31 44Q31 51 28 53"/></svg>
    </button>
  </div>
  <button type="button" class="icon-btn" aria-label="Camera">
    <svg width="70" height="72" viewBox="0 0 70 72" fill="none" stroke="currentColor" stroke-width="4.500" stroke-linejoin="round"><path d="M7 18H18Q21 18 23 15L25 12Q26 11 29 11H41Q44 11 45 12L47 15Q49 18 52 18H62Q67 18 67 23V55Q67 60 62 60H8Q3 60 3 55V23Q3 18 7 18Z"/><circle cx="35" cy="39" r="13.500"/><circle cx="55" cy="29" r="3.500" fill="currentColor" stroke="none"/></svg>
  </button>
  <button type="button" class="icon-btn ms-auto" aria-label="Voice message">
    <svg class="ms-5" width="60" height="76" viewBox="0 0 60 76" fill="none" stroke="currentColor" stroke-width="4.500" stroke-linecap="round"><rect x="23" y="4" width="22" height="43" rx="11"/><path d="M13 36Q14 58 34 58Q54 58 55 36M34 58V69"/></svg>
  </button>
</footer>

<script>
  // Scatter the small rings of the wallpaper: "x,y,size" entries placed through each region's origin and scale.
  const radius = { s: 6, m: 10, l: 13 };
  document.querySelectorAll('[data-rings]').forEach(group => {
    const [ox, oy, sx, sy] = group.dataset.map.split(',').map(Number);
    group.dataset.rings.split(' ').forEach(entry => {
      const [x, y, size] = entry.split(',');
      const ring = document.createElementNS('http://www.w3.org/2000/svg', 'circle');
      ring.setAttribute('cx', ox + x * sx);
      ring.setAttribute('cy', oy + y * sy);
      ring.setAttribute('r', radius[size]);
      group.appendChild(ring);
    });
  });
</script>
</body>
</html>
